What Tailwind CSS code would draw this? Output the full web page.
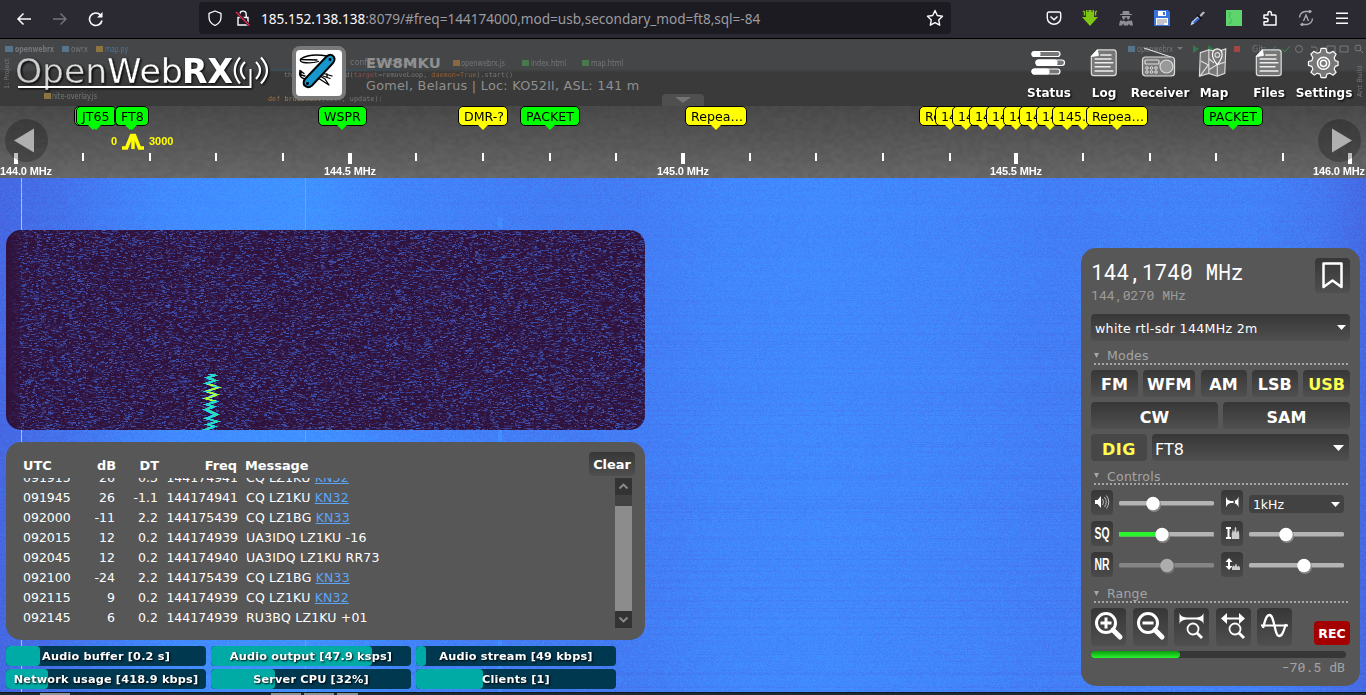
<!DOCTYPE html>
<html lang="en">
<head>
<meta charset="utf-8">
<title>OpenWebRX</title>
<script src="https://cdn.jsdelivr.net/npm/@tailwindcss/browser@4"></script>
</head>
<body class="w-[1366px] h-[695px] overflow-hidden flex flex-col bg-[#222] text-white font-['Verdana','DejaVu_Sans',sans-serif] text-[12.5px]">

<!-- shared symbols -->
<svg class="hidden">
  <symbol id="doc" viewBox="0 0 32 32"><path d="M9 2h17q3 0 3 3v22q0 2.500-3 2.500H5q-2.500 0-2.500-2.500V9z" fill="#777" stroke="#ddd" stroke-width="1.300"/><path d="M2.500 9L9 2l1 6z" fill="#fff" stroke="#fff"/><path d="M12 7.500h12M6 11.800h18M6 15.800h20M6 20h17M6 24.500h20" stroke="#eee" stroke-width="1.500"/></symbol>
  <symbol id="hist" viewBox="0 0 10 14" preserveAspectRatio="none"><path d="M0 14V7l1-1V4l1-1 .5 3L4 4V1l1-1 1 1v3l.5 3L8 4l1 1 1 4v5z" fill="#ccc"/></symbol>
</svg>

<!-- browser toolbar -->
<div class="h-[39px] shrink-0 flex items-start bg-[#2b2a33] border-b border-black">
  <div class="w-[199px] h-[37px] flex items-center pl-4 gap-5">
    <svg width="16" height="16" viewBox="0 0 16 16" fill="none" stroke="#fbfbfe" stroke-width="1.500"><path d="M15 8H2M7.500 2.500L2 8l5.500 5.500"/></svg>
    <svg width="16" height="16" viewBox="0 0 16 16" fill="none" stroke="#75747b" stroke-width="1.400"><path d="M1 8h13M8.500 2.500L14 8l-5.500 5.500"/></svg>
    <svg width="16" height="16" viewBox="0 0 16 16" fill="none" stroke="#fbfbfe" stroke-width="1.600"><path d="M14 9.500A6.300 6.300 0 1 1 12.500 4"/><path d="M14.500 1v5.500H9z" fill="#fbfbfe" stroke="none"/></svg>
  </div>
  <div class="w-[752px] h-8 mt-0.5 rounded bg-[#1c1b22] flex items-center pl-2 pr-[7px]">
    <svg width="16" height="16" viewBox="0 0 16 16" fill="none" stroke="#fbfbfe" stroke-width="1.300"><path d="M8 1l6 2.300v3.700c0 4-2.500 7-6 8.500C4.500 14 2 11 2 7V3.300z" stroke-linejoin="round"/></svg>
    <svg class="ml-3" width="16" height="16" viewBox="0 0 16 16" fill="none" stroke="#fbfbfe" stroke-width="1.400"><path d="M3 7.500h10V15H3zM4.800 7V4.500C4.800 0 11.200 0 11.200 4.500V7"/><path d="M1.500 2L14.500 15.500" stroke="#1c1b22" stroke-width="3"/><path d="M1 2L14.500 15.500" stroke="#e22850" stroke-width="1.500"/></svg>
    <span class="ml-[10px] mt-0.5 font-['Noto_Sans',sans-serif] text-[13.6px] text-[#9b9ba0] whitespace-pre"><span class="text-[#fbfbfe]">185.152.138.138</span><span class="tracking-[-0.02px]">:8079/#freq=144174000,mod=usb,secondary_mod=ft8,sql=-84</span></span>
    <svg class="ml-auto" width="18" height="18" viewBox="0 0 18 18" fill="none" stroke="#fbfbfe" stroke-width="1.400"><path d="M9 1.500l2.300 5 5.200.700-3.800 3.700 1 5.300L9 13.600l-4.700 2.600 1-5.300L1.500 7.200l5.200-.700z" stroke-linejoin="round"/></svg>
  </div>
  <div class="h-[36px] ml-auto pr-4 flex items-center gap-5">
    <svg width="16" height="16" viewBox="0 0 16 16" fill="none" stroke="#fbfbfe" stroke-width="1.400"><path d="M3 2h10q1.700 0 1.700 1.700V8a6.700 6.200 0 0 1-13.400 0V3.700Q1.300 2 3 2zM4.500 6.500L8 9.800l3.500-3.300"/></svg>
    <svg width="16" height="16" viewBox="0 0 16 16"><path d="M4 0h8v7h4l-8 9-8-9h4z" fill="#7fc514"/><path d="M1 1l1.500 1v3.500M15 1l-1.500 1v3.500" stroke="#7fc514" stroke-width="1.500" fill="none"/><path d="M6 0v2M10 0v2" stroke="#2b2a33"/></svg>
    <svg width="16" height="16" viewBox="0 0 16 16" fill="#8f8e96"><path d="M5 1h6l.7 3H14v1H2V4h2.300zM4 6h8v1l-1 2.500H9.500L9 7.500H7l-.5 2H5L4 7zM2 10.500l5 .5 1 1 1-1 5-.5 1 5h-3l-1-2-1 2H6l-1-2-1 2H1z"/></svg>
    <svg width="16" height="16" viewBox="0 0 16 16"><path d="M0 0h14l2 2v14H0z" fill="#3a73dc"/><path d="M4 1h8v5H4z" fill="#fff"/><path d="M9 2h2v3H9z" fill="#3a73dc"/><path d="M2 8h12v7H2z" fill="#fff"/><path d="M3 10h10M3 12h10M3 14h7" stroke="#889"/></svg>
    <svg width="16" height="16" viewBox="0 0 16 16"><path d="M9 6L13 1.500l2 1L11 7z" fill="#b9bbc4"/><path d="M.5 15.500l1-3.500L8 6l2 2-6.500 6z" fill="#b8d3f5"/><path d="M3 12.500l5-5 1.500 1.500-5 4.500z" fill="#3a66cf"/><path d="M7.500 5l4 4" stroke="#111" stroke-width="2"/></svg>
    <svg width="16" height="16" viewBox="0 0 16 16"><path d="M0 0h16v16H0z" fill="#5ed56c"/><path d="M2 3h3l-2 4 3 3-3 3h3" stroke="#3fbd55" fill="none"/></svg>
    <svg width="16" height="16" viewBox="0 0 16 16" fill="none" stroke="#fbfbfe" stroke-width="1.500"><path d="M2 5h4V3.200a1.700 1.700 0 0 1 3.400 0V5H13q1 0 1 1v9H2v-3.200h2.300a1.800 1.800 0 0 0 0-3.600H2z" stroke-linejoin="round"/></svg>
    <svg width="16" height="16" viewBox="0 0 16 16" fill="none" stroke="#aaa9b1" stroke-width="1.400"><path d="M1.500 7.500Q2 2.500 7 1.500h6M14.500 8.500Q14 13.500 9 14.500H3M5.500 11L8 5l2.500 6M11 0l2 1.500L11 3M5 13l-2 1.500L5 16"/></svg>
    <svg width="16" height="16" viewBox="0 0 16 16" stroke="#fbfbfe" stroke-width="1.500"><path d="M2 3.200h12M2 8.200h12M2 13.200h12"/></svg>
  </div>
</div>

<!-- receiver header -->
<header class="relative h-[67px] shrink-0 bg-linear-to-b from-[#444648] from-45% to-[#3a3a3a] to-50%">
  <svg class="absolute inset-0 blur-[0.6px]" width="1366" height="67" font-family="DejaVu Sans" font-size="8" fill="#74777a">
    <path d="M5 7h8v6H5zM62 7h7v6h-7z" fill="#57748a"/><path d="M96 7h7v6h-7zM44 54h7v6h-7z" fill="#8b7442"/>
    <text x="15" y="13" font-weight="bold" textLength="39" lengthAdjust="spacingAndGlyphs">openwebrx</text><text x="71" y="13" textLength="17" lengthAdjust="spacingAndGlyphs">owrx</text><text x="105" y="13" textLength="23" lengthAdjust="spacingAndGlyphs" fill="#4e759c">map.py</text><text x="52" y="60" textLength="45" lengthAdjust="spacingAndGlyphs">nite-overlay.js</text>
    <text x="350" y="26">config_webrx.py</text><text x="461" y="27" textLength="44" lengthAdjust="spacingAndGlyphs">openwebrx.js</text><text x="531" y="27" textLength="35" lengthAdjust="spacingAndGlyphs">index.html</text><text x="591" y="27" textLength="32" lengthAdjust="spacingAndGlyphs">map.html</text>
    <path d="M270 31h130" stroke="#35576b"/><path d="M453 21h7v6h-7z" fill="#8b6842"/><path d="M522 21h7v6h-7zM582 21h7v6h-7z" fill="#48784b"/>
    <g font-family="DejaVu Sans Mono" font-size="6.800"><text x="284" y="38">threading.Thread(<tspan fill="#8c5050">target</tspan>=removeLoop, <tspan fill="#925f35">daemon=True</tspan>).start()</text><text x="268" y="62" fill="#9c7040">def <tspan fill="#9c8450">broadcast</tspan><tspan fill="#74777a">(self, update):</tspan></text></g>
    <text transform="translate(9 50) rotate(-90)" font-size="6.500">1: Project</text><text transform="translate(1362 58) rotate(-90)" font-size="7">Ant Build</text>
    <path d="M1128 7h7v6h-7z" fill="#55748a"/><text x="1137" y="13" textLength="36" lengthAdjust="spacingAndGlyphs">openwebrx</text><path d="M1177 8h6l-3 3z"/><path d="M1193 6l6 4-6 4zM1208 6l6 4-6 4z" fill="#36774a"/><path d="M1234 7h6v6h-6z" fill="#a34646"/><text x="1252" y="13">Git:</text><path d="M1268 10l3 3 5-6" stroke="#3b769b" fill="none"/><path d="M1282 10l3 3 5-6" stroke="#3c8550" fill="none"/><g fill="none" stroke="#77797b"><circle cx="1299" cy="10" r="3.500"/><path d="M1311 8h5q3 3 0 5M1327 7h8v6h-8zM1340 7h8v6h-8z"/><circle cx="1358" cy="9" r="3"/><path d="M1360 11l3 3"/></g>
  </svg>
  <div class="relative h-full flex items-start">
    <svg class="ml-3 mt-2 drop-shadow-[1px_1px_1px_#000]" width="262" height="48" font-family="DejaVu Sans" font-size="34">
      <defs><linearGradient id="og" x1="0" x2="1"><stop offset="0" stop-color="#c4c4c4"/><stop offset="1" stop-color="#eee"/></linearGradient></defs>
      <text x="3" y="36" textLength="92" lengthAdjust="spacingAndGlyphs" fill="url(#og)" stroke="#404040" stroke-width=".500">Open</text>
      <text x="95" y="36" textLength="76" lengthAdjust="spacingAndGlyphs" fill="#fff" stroke="#404040" stroke-width=".300">Web</text>
      <text x="170" y="36" textLength="51" lengthAdjust="spacingAndGlyphs" font-weight="bold" fill="#fff">RX</text>
      <g fill="none" stroke="#fff" stroke-width="2.200"><path d="M6 40H238.500V22" stroke-width="2"/><path d="M233 15q-8 8 0 17M244 15q8 8 0 17M228 10.500q-10.500 13 0 26M249 10.500q12 13 0 26"/></g>
    </svg>
    <div class="ml-[18px] mt-[7px] size-[54px] rounded-lg bg-[#797979] p-1">
      <svg class="rounded bg-white" width="46" height="46" viewBox="0 0 46 46" fill="none" stroke="#000" stroke-width="1.300" stroke-linecap="round" stroke-linejoin="round"><path d="M31 6Q14 3 4.500 9q-1 3 3 3.500 8 1 15-1M5 9.500l16 .5M4 20.500l4 3M4 20.500q-2 7 5 8.500l4-1M5 21v4l4 1M22 28l11 7-4-6-5-3M26 23l10 3M27 26l7 2.500M31 24v3"/><path d="M30 7q5-4.500 8 0 1.500 3-1 6L16 35.500q-4 3.500-8-.5-1-4 1-6z" fill="#1696cb" stroke-width="1.900"/><circle cx="34" cy="9.500" r=".8" fill="#000"/><circle cx="11.500" cy="33.500" r=".8" fill="#000"/></svg>
    </div>
    <div class="ml-5 mt-[14px] text-[#909090]">
      <div class="text-[14.8px] leading-5 font-bold">EW8MKU</div>
      <div class="text-[12.8px] tracking-[0.26px] leading-[27px] -mt-px whitespace-nowrap">Gomel, Belarus | Loc: KO52ll, ASL: 141 m</div>
    </div>
    <nav class="ml-auto mr-[20px] mt-[7px] flex gap-2 font-bold text-xs text-center [&>div]:flex [&>div]:flex-col [&>div]:items-center [&>div]:gap-[5px] [&_span]:drop-shadow-[1px_1px_1px_#000]">
      <div class="w-[46px]"><svg width="36" height="34" viewBox="0 0 36 34" fill="#777" stroke="#fff" stroke-width="1.200"><rect x="1" y="5.500" width="28" height="5" rx="2.500"/><rect x="1" y="5.500" width="8" height="5" rx="2.500" fill="#fff"/><rect x="5" y="14" width="28.500" height="5.500" rx="2.700"/><rect x="5" y="14" width="21" height="5.500" rx="2.700" fill="#fff"/><rect x="1" y="23" width="28" height="5" rx="2.500"/><rect x="1" y="23" width="17" height="5" rx="2.500" fill="#fff"/></svg><span>Status</span></div>
      <div class="w-[48px]"><svg class="-ml-px" width="30" height="34"><use href="#doc" y="2" width="30" height="30"/></svg><span>Log</span></div>
      <div class="w-[48px]"><svg class="-ml-1 shrink-0" width="36" height="34" viewBox="0 0 36 34" fill="#777" stroke="#ddd" stroke-width="1.200"><path d="M4 2l27 9" fill="none"/><rect x="2.500" y="11" width="32" height="19" rx="3"/><rect x="5" y="14" width="14" height="4" rx="1"/><circle cx="26.500" cy="20.500" r="6.500" fill="#999"/><g stroke-width="1"><circle cx="7" cy="22" r="1.300"/><circle cx="11.500" cy="22" r="1.300"/><circle cx="16" cy="22" r="1.300"/><circle cx="7" cy="26" r="1.300"/><circle cx="11.500" cy="26" r="1.300"/><circle cx="16" cy="26" r="1.300"/></g></svg><span>Receiver</span></div>
      <div class="w-[44px]"><svg width="32" height="34" viewBox="1 1 34 34" fill="#777" stroke="#ddd" stroke-width="1.200"><path d="M3.500 7l9-3 9 2 9-3-1 26-8 3-9-3-10 3z"/><path d="M12.500 4v25M21.500 21v11M4 16l8 4-9 12M13 25l8-5 9-3M12 13l6 5" fill="none"/><path d="M21.500 20q-6-8-5-12a5 5 0 0 1 10 0q1 4-5 12z" stroke="#fff"/><circle cx="21.500" cy="9.500" r="2.500"/></svg><span>Map</span></div>
      <div class="w-[50px]"><svg class="-ml-px" width="30" height="34"><use href="#doc" y="2" width="30" height="30"/></svg><span>Files</span></div>
      <div class="w-[44px]"><svg class="-ml-0.5" width="33" height="34" viewBox="0 .5 34 34" fill="#777" stroke="#fff" stroke-width="1.200" stroke-linejoin="round"><path d="M14 7l1-4h5l1 4 3 1 3.500-2 3 3-2 3.500 1 3 3 1v4l-3 1-1 3 2 3-3 3-3.500-2-3 1-1 3.500h-5l-1-3.500-3-1-3 2-3.500-3 2-3-1-3-3.500-1v-4l3.500-1 1-3-2-3.500 3-3L11 8z" transform="translate(-.5 -.5)"/><circle cx="17" cy="17.800" r="6.200" stroke-width="1.500"/><circle cx="17" cy="17.800" r="3.200" stroke-width="1.500"/></svg><span>Settings</span></div>
    </nav>
  </div>
  <div class="absolute left-[662px] bottom-0 w-[42px] h-3 rounded-t bg-[#4f4f4f] flex justify-center items-center"><svg width="16" height="7"><path d="M0 0h16L8 6z" fill="#747474"/></svg></div>
</header>

<!-- frequency scale with bookmarks -->
<section class="relative h-[72px] shrink-0 bg-linear-to-b from-[#4c4c4c] to-[#6b6b6b] overflow-hidden">
  <canvas id="grain" class="absolute left-0 top-0 w-[1366px] h-[72px]" width="342" height="24"></canvas>
  <svg id="scale" class="absolute inset-0" width="1366" height="72" font-family="Liberation Sans" font-weight="bold" font-size="11" fill="#fff">
    <g text-anchor="middle"><text x="350" y="69" textLength="52">144.5 MHz</text><text x="683" y="69" textLength="52">145.0 MHz</text><text x="1016" y="69" textLength="52">145.5 MHz</text><text x="1339" y="69" textLength="52">146.0 MHz</text></g>
    <text x="0" y="69" textLength="52">144.0 MHz</text>
    <g fill="#ff0"><text x="111" y="39">0</text><text x="149" y="39">3000</text></g>
    <path d="M122 42h4.500l5-12.500h3L139.500 42h4.500" fill="none" stroke="#ff0" stroke-width="3.600"/><path d="M133 28v15" stroke="#ff0" stroke-width="3.500"/>
  </svg>
  <div id="marks"></div>
  <div class="absolute left-[5px] top-[13px] size-[43px] rounded-full bg-black/25"><svg width="43" height="43"><path d="M9 21.500L29 9.500v24z" fill="#b0b0b0"/></svg></div>
  <div class="absolute left-[1318px] top-[13px] size-[43px] rounded-full bg-black/25"><svg width="43" height="43"><path d="M34 21.500L14 9.500v24z" fill="#b0b0b0"/></svg></div>
</section>

<!-- waterfall and panels -->
<main class="relative h-[514px] shrink-0 bg-[#4484fc]">
  <canvas id="fall" class="absolute inset-0" width="1366" height="514"></canvas>
  <div class="relative h-full flex justify-between items-end pl-1.5 pr-1.5">
    <div class="flex flex-col pb-[3px]">
      <canvas id="spec" class="rounded-[15px] block" width="639" height="200"></canvas>
      <div class="mt-3 w-[639px] h-[198px] rounded-[15px] bg-[#575757] pt-[10px] px-[10px] text-[12.5px]">
        <div class="flex h-[26px] justify-between">
          <div class="flex pt-[4px] pl-[7px] font-bold text-[12.9px] leading-5"><span class="w-[42px]">UTC</span><span class="w-[51px] text-right">dB</span><span class="w-[43px] text-right">DT</span><span class="w-[78px] text-right">Freq</span><span class="pl-2">Message</span></div>
          <div class="w-[46px] h-6 rounded bg-linear-to-b from-[#373737] to-[#4f4f4f] text-[12.9px] font-bold text-center leading-[25px]">Clear</div>
        </div>
        <div class="flex justify-between h-[150px] overflow-hidden pr-[3px]">
          <div id="rows" class="-mt-[10px] pl-[7px] leading-5"></div>
          <div class="w-[17px] h-[150px] bg-[#424242] flex flex-col">
            <svg class="bg-[#333]" width="17" height="17"><path d="M4.500 10.500l4-4 4 4" stroke="#8c8c8c" stroke-width="1.800" fill="none"/></svg>
            <div class="mt-[11px] h-[105px] bg-[#8c8c8c]"></div>
            <svg class="bg-[#333]" width="17" height="17"><path d="M4.500 6.500l4 4 4-4" stroke="#8c8c8c" stroke-width="1.800" fill="none"/></svg>
          </div>
        </div>
      </div>
      <div class="mt-1.5 w-[610px] grid grid-cols-3 gap-x-[5px] gap-y-[3px] text-[11.3px] tracking-[0.17px] font-bold text-center leading-[22px] [&>div]:relative [&>div]:h-5 [&>div]:rounded [&>div]:bg-[#003850] [&>div]:overflow-hidden [&_i]:absolute [&_i]:left-0 [&_i]:top-0 [&_i]:h-5 [&_i]:rounded [&_i]:bg-[#00aba6] [&_span]:relative [&_span]:whitespace-nowrap [&_span]:[text-shadow:1px_1px_2px_#000]">
        <div><i class="w-[34px]"></i><span>Audio buffer [0.2 s]</span></div>
        <div><i class="w-[161px]"></i><span>Audio output [47.9 ksps]</span></div>
        <div><i class="w-[10px]"></i><span>Audio stream [49 kbps]</span></div>
        <div><i class="w-[42px]"></i><span>Network usage [418.9 kbps]</span></div>
        <div><i class="w-[64px]"></i><span>Server CPU [32%]</span></div>
        <div><i class="w-[67px]"></i><span>Clients [1]</span></div>
      </div>
    </div>

    <div class="mb-[6px] w-[279px] h-[438px] rounded-[15px] bg-[#575757] p-[10px] pb-0 flex flex-col">
      <div class="h-[56px] flex justify-between font-['Roboto_Mono','DejaVu_Sans_Mono',monospace]">
        <div><div class="text-[21.2px] leading-[29px]">144,1740 MHz</div><div class="text-[13.2px] leading-4 text-[#9c9c9c]">144,0270 MHz</div></div>
        <svg class="rounded" width="35" height="35"><defs><linearGradient id="bg" x2="0" y2="1"><stop stop-color="#373737"/><stop offset="1" stop-color="#4f4f4f"/></linearGradient></defs><path d="M0 0h35v35H0z" fill="url(#bg)"/><path d="M8.500 5.500h18V29l-9-6.500-9 6.500z" fill="none" stroke="#fff" stroke-width="2.500" stroke-linejoin="round"/></svg>
      </div>
      <div class="h-[27px] rounded bg-linear-to-b from-[#373737] to-[#4f4f4f] flex items-center justify-between pl-1 pr-1 text-[12.6px] tracking-[0.3px]"><span class="mt-[3px]">white rtl-sdr 144MHz 2m</span><svg width="9" height="5"><path d="M0 0h9L4.500 5z" fill="#fff"/></svg></div>
      <div class="h-[24px] mt-0 ml-[3px] mr-[2px] border-b-2 border-dotted border-[#a5a5a5] text-[#a5a5a5] flex items-end"><svg class="mb-[5px]" width="13" height="5"><path d="M0 0h5L2.500 5z" fill="#a5a5a5"/></svg><span class="leading-[15px] tracking-[0.25px]">Modes</span></div>
      <div class="mt-[5px] flex flex-col gap-[5px] text-base font-bold text-center leading-[29px] [&_b]:h-[27px]">
        <div class="flex justify-between [&>b]:rounded [&>b]:bg-linear-to-b [&>b]:from-[#373737] [&>b]:to-[#4f4f4f]"><b class="w-[47px]">FM</b><b class="w-[52px]">WFM</b><b class="w-[46px]">AM</b><b class="w-[46px]">LSB</b><b class="w-[47px] text-[#ffff50]">USB</b></div>
        <div class="flex gap-[5px] [&>b]:flex-1 [&>b]:rounded [&>b]:bg-linear-to-b [&>b]:from-[#373737] [&>b]:to-[#4f4f4f] [&>b]:leading-[31px]"><b>CW</b><b>SAM</b></div>
        <div class="flex gap-[5px]"><b class="w-[56px] rounded bg-[#474747] text-[#ffff50] tracking-[0.6px] leading-[31px]">DIG</b><div class="w-[197px] h-[27px] rounded bg-linear-to-b from-[#373737] to-[#4f4f4f] flex items-center justify-between pl-[3px] pr-[5px] font-normal"><span class="mt-[3px]">FT8</span><svg width="11" height="6"><path d="M0 0h11L5.500 6z" fill="#fff"/></svg></div></div>
      </div>
      <div class="h-[24px] ml-[3px] mr-[2px] border-b-2 border-dotted border-[#a5a5a5] text-[#a5a5a5] flex items-end"><svg class="mb-[5px]" width="13" height="5"><path d="M0 0h5L2.500 5z" fill="#a5a5a5"/></svg><span class="leading-[13px] tracking-[0.25px]">Controls</span></div>
      <div class="mt-[5px] grid grid-cols-[22px_95px_22px_95px] gap-x-[6.300px] gap-y-[6px] items-center [&>svg.k]:rounded [&>svg.k]:bg-linear-to-b [&>svg.k]:from-[#373737] [&>svg.k]:to-[#4a4a4a]">
        <svg class="k" width="22" height="25"><path d="M4 10h2.500l3.500-4v12l-3.500-4H4z" fill="#fff"/><g fill="none" stroke="#bbb"><path d="M11.500 9q2 3 0 6M13.500 7q3.500 5 0 10M15.500 5.500q4.500 6.500 0 13"/></g></svg>
        <svg class="overflow-visible" width="95" height="24"><rect y="10" width="95" height="4.500" rx="1.500" fill="#b4b4b4"/><circle cx="35" cy="14" r="7" fill="#888"/><circle cx="34" cy="12.500" r="6.700" fill="#fff"/></svg>
        <svg class="k" width="22" height="25"><path d="M5 6.500q1 4 5 4.500v2q-4 .5-5 4.500zM17.500 6.500q-1 4-5 4.500v2q4 .5 5 4.500zM9 11h5v2H9z" fill="#fff"/></svg>
        <div class="mt-[3px] h-[18px] rounded bg-[#424242] flex items-center justify-between pl-[4px] pr-[4px] text-[12.5px]"><span class="mt-[2px]">1kHz</span><svg width="9" height="5"><path d="M0 0h9L4.500 5z" fill="#fff"/></svg></div>
        <svg class="k" width="22" height="25" font-family="Liberation Sans Narrow, Liberation Sans" font-weight="bold" font-size="16" fill="#fff"><text x="3.500" y="18" textLength="15" lengthAdjust="spacingAndGlyphs">SQ</text></svg>
        <svg class="overflow-visible" width="95" height="24"><rect y="10" width="95" height="4.500" rx="1.500" fill="#b4b4b4"/><path d="M0 10h43v4.500H0zM94 10h1v4.500h-1z" fill="#2af52f"/><circle cx="44" cy="14" r="7" fill="#888"/><circle cx="43" cy="12.500" r="6.700" fill="#fff"/></svg>
        <svg class="k" width="22" height="25"><path d="M5 7h5M5 17h5M7.500 7v10" stroke="#fff" stroke-width="2"/><use href="#hist" x="10.500" y="6" width="8" height="12"/></svg>
        <svg class="overflow-visible" width="95" height="24"><rect y="10" width="95" height="4.500" rx="1.500" fill="#b4b4b4"/><circle cx="38" cy="14" r="7" fill="#888"/><circle cx="37" cy="12.500" r="6.700" fill="#fff"/></svg>
        <svg class="k" width="22" height="25" font-family="Liberation Sans Narrow, Liberation Sans" font-weight="bold" font-size="16" fill="#fff"><text x="3.500" y="18" textLength="15" lengthAdjust="spacingAndGlyphs">NR</text></svg>
        <svg class="overflow-visible" width="95" height="24"><rect y="10" width="95" height="4.500" rx="1.500" fill="#858585"/><circle cx="49" cy="14" r="7" fill="#6c6c6c"/><circle cx="48" cy="12.500" r="6.700" fill="#adadad"/></svg>
        <svg class="k" width="22" height="25"><path d="M8 6l3.500 4H9v4h2.500L8 18l-3.500-4H7v-4H4.500z" fill="#fff"/><use href="#hist" x="11" y="12" width="8" height="6"/></svg>
        <svg class="overflow-visible" width="95" height="24"><rect y="10" width="95" height="4.500" rx="1.500" fill="#b4b4b4"/><circle cx="56" cy="14" r="7" fill="#888"/><circle cx="55" cy="12.500" r="6.700" fill="#fff"/></svg>
      </div>
      <div class="h-[26px] ml-[3px] mr-[2px] border-b-2 border-dotted border-[#a5a5a5] text-[#a5a5a5] flex items-end"><svg class="mb-[5px]" width="13" height="5"><path d="M0 0h5L2.500 5z" fill="#a5a5a5"/></svg><span class="leading-[15px] tracking-[0.2px]">Range</span></div>
      <div class="mt-[5px] flex gap-[6.500px] items-end [&>svg]:rounded [&>svg]:bg-linear-to-b [&>svg]:from-[#373737] [&>svg]:to-[#4f4f4f]">
        <svg width="35" height="38" fill="none" stroke="#fff"><circle cx="15" cy="15" r="9.500" stroke-width="3"/><path d="M22 22l7 7" stroke-width="5" stroke-linecap="round"/><path d="M9.500 15h11M15 9.500v11" stroke-width="3"/></svg>
        <svg width="35" height="38" fill="none" stroke="#fff"><circle cx="15" cy="15" r="9.500" stroke-width="3"/><path d="M22 22l7 7" stroke-width="5" stroke-linecap="round"/><path d="M9.500 15h11" stroke-width="3"/></svg>
        <svg width="35" height="38" fill="none" stroke="#fff"><path d="M5.500 5q1 4 7 4.500h10q6-.5 7-4.500v11q-1-4-7-4.500h-10q-6 .5-7 4.500z" fill="#fff" stroke="none"/><circle cx="19" cy="21" r="5.500" stroke-width="1.800"/><path d="M23 25l5 5" stroke-width="2.800"/></svg>
        <svg width="35" height="38" fill="none" stroke="#fff"><path d="M5 10.500L11 5v4.500h12V5l6 5.500-6 5.500v-4.500H11V16z" fill="#fff" stroke="none"/><circle cx="19" cy="21" r="5.500" stroke-width="1.800"/><path d="M23 25l5 5" stroke-width="2.800"/></svg>
        <svg width="35" height="38" fill="none" stroke="#fff" stroke-width="2"><path d="M4 17.500h27"/><path d="M6 20C9 9 10 7 12.500 7c5 0 5 21 9.500 21 3 0 4-3 7-12" stroke-width="2.300"/></svg>
        <div class="ml-auto mb-[1px] w-9 h-6 rounded bg-[#a50000] text-[12.500px] font-bold text-center leading-[25px]">REC</div>
      </div>
      <div class="mt-[5px] w-[255px] h-[7px] shrink-0 rounded bg-[#373737] overflow-hidden"><div class="w-[89px] h-full rounded-r bg-linear-to-b from-[#0b9c10] to-[#2af52f]"></div></div>
      <div class="mt-[1px] pr-[5px] text-right leading-4 text-[13.2px] text-[#a5a5a5] font-['Roboto_Mono','DejaVu_Sans_Mono',monospace]">-70.5 dB</div>
    </div>
  </div>
</main>
<footer class="h-[3px] shrink-0 bg-[#1c2b33] border-t border-[#10171c] flex items-end"><svg width="1366" height="2" fill="#8a9498"><path d="M40 0h30v2H40zM271 0h30v2h-30zM304 0h30v2h-30zM337 0h21v2h-21z"/></svg></footer>

<script>
var seed = 7;
function rnd() { seed = (seed * 1664525 + 1013904223) >>> 0; return seed / 4294967296; }

// ticks
var svg = document.getElementById('scale');
for (var i = 0; i <= 20; i++) {
  var r = document.createElementNS('http://www.w3.org/2000/svg', 'rect'), major = i % 5 == 0;
  r.setAttribute('x', Math.round(16.2 + i * 66.67 - (major ? 2 : 1)));
  r.setAttribute('y', 47);
  r.setAttribute('width', major ? 4 : 2);
  r.setAttribute('height', major ? 11 : 8);
  svg.appendChild(r);
}

// bookmarks: left, width, label, yellow
var marks = [[74,41,'JT65',0],[76,41,'JT65',0],[114,33,'FT8',0],[115,33.5,'FT8',0],[318,49,'WSPR',0],[458,50,'DMR-?',1],[520,60,'PACKET',0],[685,62,'Repea…',1],
 [919,62,'Repea…',1],[935,62,'145.…',1],[952,62,'145.…',1],[969,60,'145.…',1],[986,60,'145.…',1],[1003,60,'145.…',1],[1019,60,'145.…',1],[1036,60,'145.…',1],[1052,62,'145.…',1],[1086,62,'Repea…',1],[1203,60,'PACKET',0]];
document.getElementById('marks').innerHTML = marks.map(function (m) {
  return '<div class="absolute top-0 h-[20px] rounded-[5px] border border-black text-black text-[12.6px] leading-[19px] px-[5px] whitespace-nowrap ' + (m[3] ? 'bg-[#ff0]' : 'bg-[#0f0]') + '" style="left:' + m[0] + 'px;width:' + m[1] + 'px">' + m[2] + '</div>';
}).join('') + [[93,0],[96,0],[130,0],[132,0],[342,0],[483,1],[550,0],[716,1],[950,1],[966,1],[983,1],[1000,1],[1016,1],[1033,1],[1050,1],[1067,1],[1083,1],[1117,1],[1233,0]].map(function (a) {
  return '<svg class="absolute top-[19px] ' + (a[1] ? 'text-[#ff0]' : 'text-[#0f0]') + '" width="10" height="5" style="left:' + (a[0] - 5) + 'px"><path d="M0 0h10L5 5z" fill="currentColor"/></svg>';
}).join('');

// decoded messages
var msgs = [['091915','26','0.3','144174941','CQ LZ1KU ','KN32'],['091945','26','-1.1','144174941','CQ LZ1KU ','KN32'],['092000','-11','2.2','144175439','CQ LZ1BG ','KN33'],['092015','12','0.2','144174939','UA3IDQ LZ1KU -16',''],['092045','12','0.2','144174940','UA3IDQ LZ1KU RR73',''],['092100','-24','2.2','144175439','CQ LZ1BG ','KN33'],['092115','9','0.2','144174939','CQ LZ1KU ','KN32'],['092145','6','0.2','144174939','RU3BQ LZ1KU +01','']];
document.getElementById('rows').innerHTML = msgs.map(function (m) {
  return '<div class="flex h-5"><span class="w-[52px]">' + m[0] + '</span><span class="w-[40px] text-right">' + m[1] + '</span><span class="w-[43px] text-right">' + m[2] + '</span><span class="w-[80px] text-right">' + m[3] + '</span><span class="pl-2 whitespace-pre tracking-[0.18px]">' + m[4] + '<a class="underline text-[#5ca5f7]">' + m[5] + '</a></span></div>';
}).join('');

function paint(id, fn) {
  var c = document.getElementById(id), x = c.getContext('2d'), im = x.createImageData(c.width, c.height), p = 0;
  for (var j = 0; j < c.height; j++) for (var i = 0; i < c.width; i++) {
    var q = fn(i, j); im.data[p++] = q[0]; im.data[p++] = q[1]; im.data[p++] = q[2]; im.data[p++] = q.length > 3 ? q[3] : 255;
  }
  x.putImageData(im, 0, 0);
  return x;
}

// mottled texture
paint('grain', function () { return [0, 0, 0, rnd() * 22]; });

// wideband waterfall
var stops = [[0,.1],[60,.28],[110,.5],[170,.72],[300,.86],[330,.8],[400,.6],[560,.46],[640,.48],[720,.64],[820,.7],[950,.62],[1060,.5],[1150,.56],[1250,.56],[1320,.4],[1366,.12]];
function level(x) {
  for (var k = 1; k < stops.length; k++) if (x <= stops[k][0]) {
    var a = stops[k - 1], b = stops[k];
    return a[1] + (b[1] - a[1]) * (x - a[0]) / (b[0] - a[0]);
  }
  return .1;
}
var rowv = [], lvl = [];
for (var j = 0; j < 514; j++) rowv.push((rnd() - .5) * .07 - (j > 120 && rnd() < .18 ? .1 : 0));
for (var i = 0; i < 1366; i++) lvl.push(level(i));
paint('fall', function (i, j) {
  if (i == 21) return rnd() < .3 ? [90, 230, 150] : [150, 235, 110];
  if (i == 305) return [40, 200, 225];
  var v = lvl[i] + rowv[j] + (rnd() - .5) * .32;
  if (i > 497 && i < 502 && (j > 38 && j < 50 || j > 250)) v += .25;
  v = Math.max(0, Math.min(1, v));
  return [70 - 7 * v, 98 + 56 * v, 222 + 36 * Math.min(1, v * 1.3)];
});

// narrowband waterfall
var s = 0, hold = 0;
var sx = paint('spec', function (i, j) {
  if (hold-- <= 0) { s = rnd(); hold = Math.floor(rnd() * 3); }
  var v = s < .4 ? 0 : Math.pow((s - .4) / .6, 1.8);
  if (i < 14) v *= i / 28;
  v *= .55 + rnd() * .25;
  return [48 + 20 * v, 18 + 100 * v, 59 + 185 * v];
});
var cx = 203, dir = 3;
for (var y = 144; y < 200; y++) {
  cx += dir * (.5 + rnd() * .7);
  if (cx > 207 + rnd() * 2) dir = -3;
  if (cx < 201 + rnd() * 2) dir = 3;
  sx.fillStyle = '#2f8df0'; sx.fillRect(Math.round(cx) - 4, y, 8, 1);
  sx.fillStyle = y > 152 && y < 172 && rnd() < .7 ? '#a4fc3c' : '#24dcc0'; sx.fillRect(Math.round(cx) - 3, y, 6, 1);
}
</script>
</body>
</html>
